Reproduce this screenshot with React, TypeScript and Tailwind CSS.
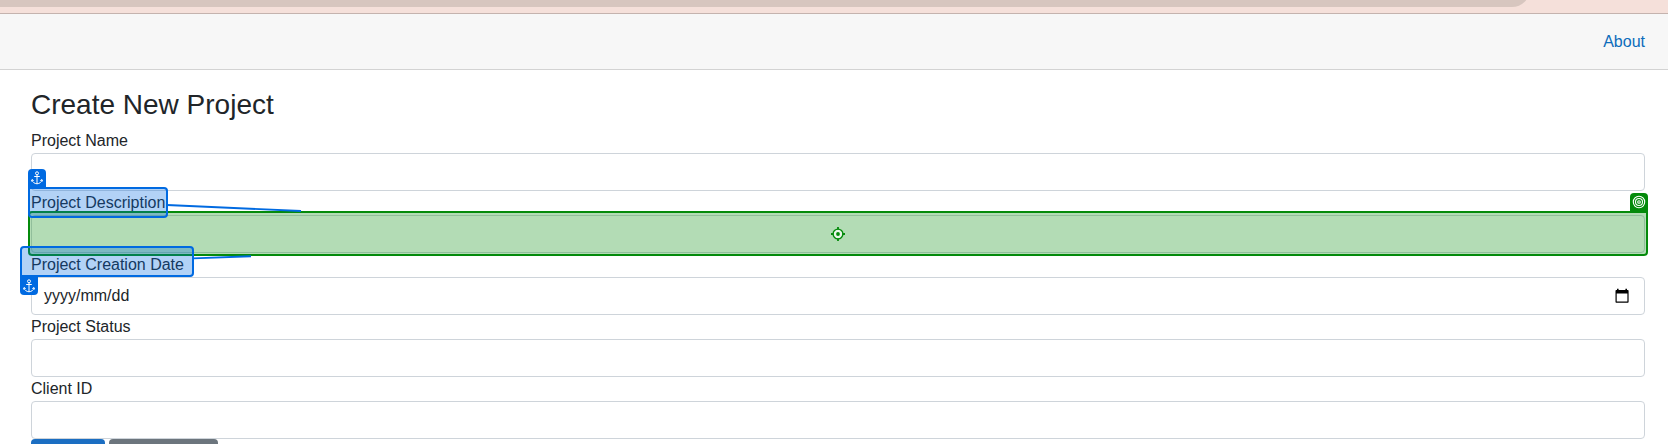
import type { ReactNode } from "react";

function Field({ label, children }: { label: string; children?: ReactNode }) {
  return (
    <div>
      <div className="h-6 text-base leading-6">{label}</div>
      <div className="flex h-[38px] items-center justify-between rounded border border-[#ced4da] bg-white pl-3 pr-[15px]">
        {children}
      </div>
    </div>
  );
}

function Anchor() {
  return (
    <svg width="12" height="14" viewBox="0 0 12 14" fill="none" stroke="#fff" strokeWidth="1">
      <circle cx="6" cy="2.3" r="1.5" />
      <path d="M6 3.8v9M3.2 5.5h5.6M1 9c.4 2.2 2.6 3.6 5 3.8 2.4-.2 4.600-1.600 5-3.800M.5 10.400 1 8.500l1.700 1.100M11.500 10.400 11 8.500l-1.700 1.100" />
    </svg>
  );
}

function Calendar() {
  return (
    <svg width="14" height="16" viewBox="0 0 14 16" className="text-black">
      <path
        fill="currentColor"
        fillRule="evenodd"
        d="M2 .8h1.600V2h6.800V.8H12V2h.6c.6 0 1 .4 1 1v10.800c0 .6-.4 1-1 1H1.500c-.6 0-1-.4-1-1V3c0-.6.4-1 1-1H2zM1.700 5.600v8h10.700v-8z"
      />
    </svg>
  );
}

export default function App() {
  return (
    <div className="relative h-[444px] w-[1668px] overflow-hidden bg-white font-['Liberation_Sans',Arial,sans-serif] text-[#212529]">
      <div className="flex h-[14px] items-end overflow-hidden border-b border-[#c4b3ae] bg-[#f5e0da] pb-1.5">
        <div className="h-7 w-[1530px] shrink-0 rounded-br-[18px] bg-[#d7c6bf]" />
      </div>
      <nav className="flex h-14 items-center justify-end border-b border-[#d3d3d3] bg-[#f7f7f7] pr-[23px] text-base text-[#0c6cbb]">
        <a>About</a>
      </nav>
      <main className="flex flex-col pl-[31px] pr-[23px] pt-[18px]">
        <h1 className="mb-[7px] h-[34px] text-[28px] leading-[34px]">Create New Project</h1>
        <Field label="Project Name" />
        <Field label="Project Description" />
        <Field label="Project Creation Date">
          <span className="text-base">yyyy/mm/dd</span>
          <Calendar />
        </Field>
        <Field label="Project Status" />
        <Field label="Client ID" />
        <div className="flex gap-1">
          <div className="h-[38px] w-[74px] rounded bg-[#1b6ec2]" />
          <div className="h-[38px] w-[109px] rounded bg-[#6c757d]" />
        </div>
      </main>

      <div className="absolute left-[28px] top-[193px] flex w-[1620px] flex-col items-end">
        <div className="flex size-[18px] items-center justify-center rounded-t bg-[#048a0b]">
          <svg width="14" height="14" viewBox="0 0 14 14" fill="none" stroke="#fff">
            <circle cx="7" cy="7" r="5.700" strokeWidth="1.100" />
            <circle cx="7" cy="7" r="3.500" strokeWidth="1.100" />
            <circle cx="7" cy="7" r="1.300" strokeWidth="1.100" />
          </svg>
        </div>
        <div className="flex h-[45px] w-full items-center justify-center rounded rounded-tr-none border-2 border-[#048a0b] bg-[#048a0b]/30">
          <svg width="14" height="14" viewBox="0 0 14 14" fill="none" stroke="#048a0b">
            <circle cx="7" cy="7" r="4.900" strokeWidth="1.400" fill="#e9f6e9" />
            <circle cx="7" cy="7" r="1.900" fill="#048a0b" stroke="none" />
            <path d="M7 0v2.400M7 11.600V14M0 7h2.400M11.600 7H14" strokeWidth="1.800" />
          </svg>
        </div>
      </div>
      <svg className="absolute left-0 top-0" width="320" height="300" fill="none" stroke="#006ae1" strokeWidth="1.900">
        <path d="M167 205 L301 211" />
        <path d="M193 258.400 L251 256.200" />
      </svg>
      <div className="absolute left-[28px] top-[169px] flex flex-col">
        <div className="flex size-[18px] items-center justify-center rounded-t bg-[#006ae1]">
          <Anchor />
        </div>
        <div className="h-[31px] w-[140px] rounded rounded-tl-none border-2 border-[#006ae1] bg-[#006ae1]/30" />
      </div>
      <div className="absolute left-[20px] top-[246px] flex flex-col">
        <div className="h-[31px] w-[174px] rounded rounded-bl-none border-2 border-[#006ae1] bg-[#006ae1]/30" />
        <div className="flex size-[18px] items-center justify-center rounded-b bg-[#006ae1]">
          <Anchor />
        </div>
      </div>
    </div>
  );
}
